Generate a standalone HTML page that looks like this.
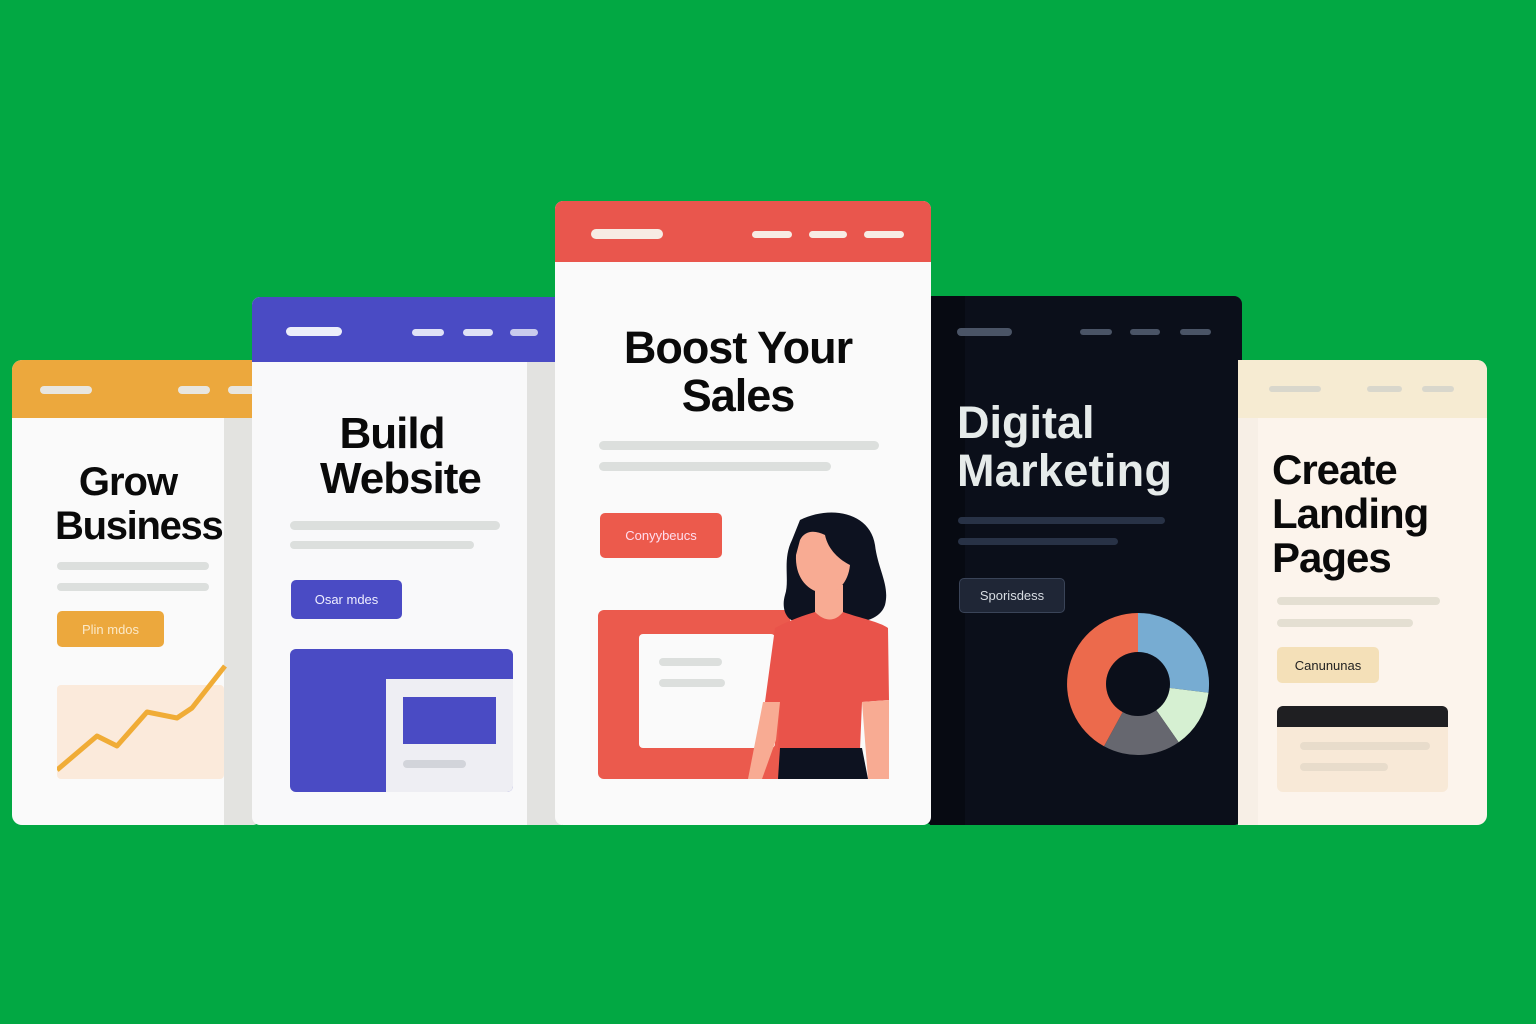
<!DOCTYPE html>
<html><head><meta charset="utf-8"><style>
*{margin:0;padding:0;box-sizing:border-box}
body{width:1536px;height:1024px;background:#02a843;position:relative;overflow:hidden;font-family:"Liberation Sans",sans-serif}
.a{position:absolute}
.pill{position:absolute;border-radius:5px}
.t{position:absolute;font-weight:bold;letter-spacing:-1px;line-height:1}
.btn{position:absolute;border-radius:5px;font-size:13px;display:flex;align-items:center;justify-content:center}
</style></head><body>

<!-- Card 1 -->
<div class="a" style="left:12px;top:360px;width:250px;height:465px;background:#fafafa;border-radius:10px;overflow:hidden">
  <div class="a" style="left:0;top:0;width:250px;height:58px;background:#eca83d"></div>
  <div class="a" style="left:212px;top:58px;width:38px;height:407px;background:#e3e3e0"></div>
  <div class="pill" style="left:28px;top:26px;width:52px;height:8px;background:#e8e6e0"></div>
  <div class="pill" style="left:166px;top:26px;width:32px;height:8px;background:#e8e6e0"></div>
  <div class="pill" style="left:216px;top:26px;width:30px;height:8px;background:#e8e6e0"></div>
  <div class="t" style="left:0;width:232px;text-align:center;top:102px;font-size:40px;color:#0a0a0a">Grow</div>
  <div class="t" style="left:43px;top:146px;font-size:40px;color:#0a0a0a;letter-spacing:-1.3px">Business</div>
  <div class="pill" style="left:45px;top:202px;width:152px;height:8px;background:#dcdfdd"></div>
  <div class="pill" style="left:45px;top:223px;width:152px;height:8px;background:#dcdfdd"></div>
  <div class="btn" style="left:45px;top:251px;width:107px;height:36px;background:#eca83d;color:#fbe9c8">Plin mdos</div>
  <div class="a" style="left:45px;top:325px;width:167px;height:94px;background:#fbeadb;border-radius:4px"></div>
  <svg class="a" style="left:45px;top:300px" width="170" height="120"><polyline points="0,110 40,76 60,86 90,52 120,58 135,48 168,6" fill="none" stroke="#f0ac36" stroke-width="5" stroke-linejoin="round"/></svg>
</div>

<!-- Card 2 -->
<div class="a" style="left:252px;top:297px;width:310px;height:528px;background:#f9f9fa;border-radius:8px 0 0 8px;overflow:hidden">
  <div class="a" style="left:0;top:0;width:310px;height:65px;background:#4a4bc4"></div>
  <div class="a" style="left:275px;top:65px;width:35px;height:463px;background:#e2e2e0"></div>
  <div class="pill" style="left:34px;top:30px;width:56px;height:9px;background:#eceefa"></div>
  <div class="pill" style="left:160px;top:32px;width:32px;height:7px;background:#dfe1f6"></div>
  <div class="pill" style="left:211px;top:32px;width:30px;height:7px;background:#dfe1f6"></div>
  <div class="pill" style="left:258px;top:32px;width:28px;height:7px;background:#c9cbed"></div>
  <div class="t" style="left:0;width:280px;text-align:center;top:115px;font-size:44px;color:#0a0a0a">Build</div>
  <div class="t" style="left:68px;top:160px;font-size:44px;color:#0a0a0a">Website</div>
  <div class="pill" style="left:38px;top:224px;width:210px;height:9px;background:#dcdfdd"></div>
  <div class="pill" style="left:38px;top:244px;width:184px;height:8px;background:#dcdfdd"></div>
  <div class="btn" style="left:39px;top:283px;width:111px;height:39px;background:#4a4bc4;color:#eef">Osar mdes</div>
  <div class="a" style="left:38px;top:352px;width:223px;height:143px;background:#4a4bc4;border-radius:6px;overflow:hidden">
    <div class="a" style="left:96px;top:30px;width:127px;height:113px;background:#eeeef3"></div>
    <div class="a" style="left:113px;top:48px;width:93px;height:47px;background:#4a4bc4"></div>
    <div class="pill" style="left:113px;top:111px;width:63px;height:8px;background:#d2d4da"></div>
  </div>
</div>

<!-- Card 4 -->
<div class="a" style="left:925px;top:296px;width:317px;height:529px;background:#0b0f1a;border-radius:8px">
  <div class="a" style="left:5px;top:0;width:35px;height:529px;background:#070a12"></div>
  <div class="pill" style="left:32px;top:32px;width:55px;height:8px;background:#4a5466"></div>
  <div class="pill" style="left:155px;top:33px;width:32px;height:6px;background:#4a5466"></div>
  <div class="pill" style="left:205px;top:33px;width:30px;height:6px;background:#4a5466"></div>
  <div class="pill" style="left:255px;top:33px;width:31px;height:6px;background:#4a5466"></div>
  <div class="t" style="left:32px;top:104px;font-size:45px;color:#e6ebea;letter-spacing:0">Digital</div>
  <div class="t" style="left:32px;top:152px;font-size:45px;color:#e6ebea;letter-spacing:0.3px">Marketing</div>
  <div class="pill" style="left:33px;top:221px;width:207px;height:7px;background:#283246"></div>
  <div class="pill" style="left:33px;top:242px;width:160px;height:7px;background:#283246"></div>
  <div class="btn" style="left:34px;top:282px;width:106px;height:35px;background:#1f2636;border:1px solid #3a4458;color:#d8dde3">Sporisdess</div>
  <svg class="a" style="left:138px;top:313px" width="150" height="150">
    <g transform="translate(75,75)">
      <path d="M0,-71 A71,71 0 0,1 70.5,8.7 L0,0Z" fill="#77acd2"/>
      <path d="M70.5,8.7 A71,71 0 0,1 40.7,58.2 L0,0Z" fill="#d6f0d2"/>
      <path d="M40.7,58.2 A71,71 0 0,1 -34,62.3 L0,0Z" fill="#66676f"/>
      <path d="M-34,62.3 A71,71 0 0,1 0,-71 L0,0Z" fill="#ec6a4c"/>
      <circle r="32" fill="#0b0f1a"/>
    </g>
  </svg>
</div>

<!-- Card 3 -->
<div class="a" style="left:555px;top:201px;width:376px;height:624px;background:#fafafa;border-radius:8px;overflow:hidden">
  <div class="a" style="left:0;top:0;width:376px;height:61px;background:#e9564d"></div>
  <div class="pill" style="left:36px;top:28px;width:72px;height:10px;background:#f7ece4"></div>
  <div class="pill" style="left:197px;top:30px;width:40px;height:7px;background:#f7ece4"></div>
  <div class="pill" style="left:254px;top:30px;width:38px;height:7px;background:#f7ece4"></div>
  <div class="pill" style="left:309px;top:30px;width:40px;height:7px;background:#f7ece4"></div>
  <div class="t" style="left:0;width:366px;text-align:center;top:124px;font-size:45px;color:#0a0a0a">Boost Your</div>
  <div class="t" style="left:0;width:366px;text-align:center;top:172px;font-size:45px;color:#0a0a0a">Sales</div>
  <div class="pill" style="left:44px;top:240px;width:280px;height:9px;background:#dcdfdd"></div>
  <div class="pill" style="left:44px;top:261px;width:232px;height:9px;background:#dcdfdd"></div>
  <div class="btn" style="left:45px;top:312px;width:122px;height:45px;background:#ec5a4c;color:#fde">Conyybeucs</div>
  <div class="a" style="left:43px;top:409px;width:192px;height:169px;background:#eb5a4d;border-radius:6px">
    <div class="a" style="left:41px;top:24px;width:136px;height:114px;background:#fafafa;border-radius:4px"></div>
    <div class="pill" style="left:61px;top:48px;width:63px;height:8px;background:#dcdfdd"></div>
    <div class="pill" style="left:61px;top:69px;width:66px;height:8px;background:#dcdfdd"></div>
  </div>
  <svg class="a" style="left:185px;top:310px" width="160" height="270">
    <g transform="translate(-740,-511)">
      <path d="M800,520 C830,505 870,512 875,545 C878,570 890,585 885,605 C880,620 860,625 840,620 L800,620 C790,625 780,612 785,595 C790,580 782,560 792,540 Z" fill="#0d1220"/>
      <rect x="815" y="585" width="28" height="38" fill="#f8ab93"/>
      <path d="M800,540 C805,530 815,530 825,535 C828,550 840,560 850,565 C848,585 835,595 822,593 C805,590 795,575 796,555 Z" fill="#f8ab93"/>
      <path d="M775,628 C790,620 805,615 815,612 C825,622 835,622 843,612 C860,618 880,622 888,628 L889,700 L862,702 L860,750 L778,750 L780,702 L765,702 Z" fill="#e9534a"/>
      <path d="M763,702 L780,702 L776,740 L762,779 L748,779 Z" fill="#f8ab93"/>
      <path d="M862,702 L889,700 L889,779 L868,779 Z" fill="#f8ab93"/>
      <path d="M780,748 L862,748 L868,779 L778,779 Z" fill="#0d1220"/>
    </g>
  </svg>
</div>

<!-- Card 5 -->
<div class="a" style="left:1238px;top:360px;width:249px;height:465px;background:#fcf4ec;border-radius:0 10px 10px 0;overflow:hidden">
  <div class="a" style="left:0;top:0;width:249px;height:58px;background:#f6ebd2"></div>
  <div class="a" style="left:0;top:58px;width:20px;height:407px;background:#f7efe6"></div>
  <div class="pill" style="left:31px;top:26px;width:52px;height:6px;background:#d9d7cc"></div>
  <div class="pill" style="left:129px;top:26px;width:35px;height:6px;background:#d9d7cc"></div>
  <div class="pill" style="left:184px;top:26px;width:32px;height:6px;background:#d9d7cc"></div>
  <div class="t" style="left:34px;top:88px;font-size:42px;color:#0a0a0a;line-height:44px">Create<br>Landing<br>Pages</div>
  <div class="pill" style="left:39px;top:237px;width:163px;height:8px;background:#e4dfd2"></div>
  <div class="pill" style="left:39px;top:259px;width:136px;height:8px;background:#e4dfd2"></div>
  <div class="btn" style="left:39px;top:287px;width:102px;height:36px;background:#f4e0b8;color:#222">Canununas</div>
  <div class="a" style="left:39px;top:346px;width:171px;height:86px;background:#f8e9d7;border-radius:6px;overflow:hidden">
    <div class="a" style="left:0;top:0;width:171px;height:21px;background:#1f1f22"></div>
    <div class="pill" style="left:23px;top:36px;width:130px;height:8px;background:#e8dccb"></div>
    <div class="pill" style="left:23px;top:57px;width:88px;height:8px;background:#e8dccb"></div>
  </div>
</div>

</body></html>
